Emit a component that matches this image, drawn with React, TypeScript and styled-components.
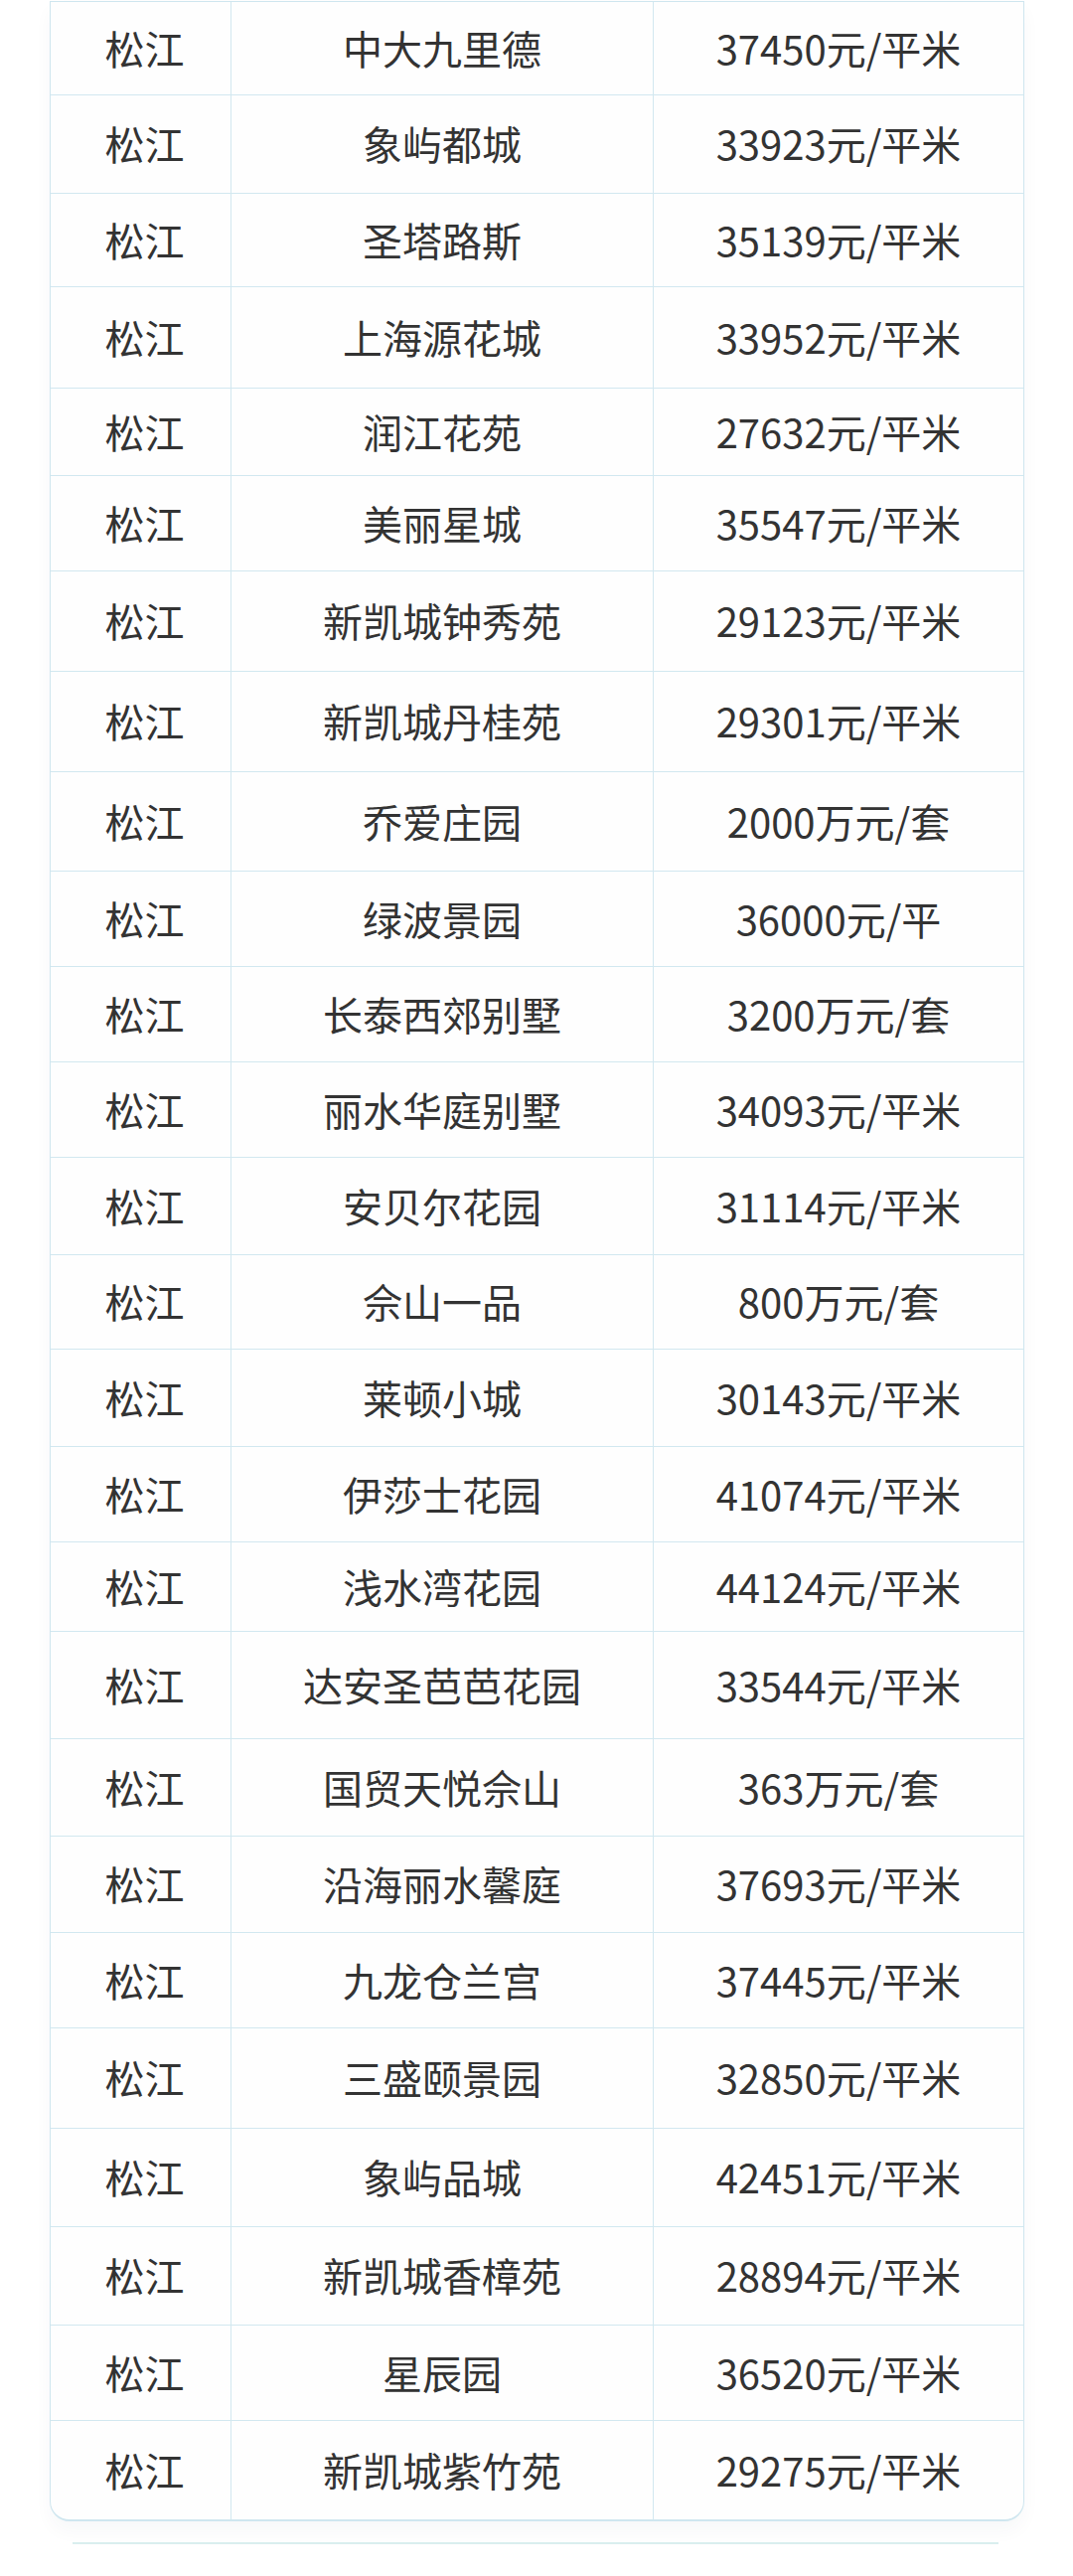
import styled, {createGlobalStyle} from "styled-components";

const GlobalStyle = createGlobalStyle`
  html, body {
    margin: 0;
    padding: 0;
    background: #ffffff;
  }
  body {
    font-family: "Noto Sans CJK SC", "Noto Sans", sans-serif;
  }
`

const Page = styled.div`
  width: 1080px;
  height: 2592px;
  padding-top: 1px;
  box-sizing: border-box;
  overflow: hidden;
  background: #ffffff;
`
const Table = styled.div`
  margin-left: 50px;
  width: 981px;
  box-sizing: border-box;
  border: 1px solid #cfe6ef;
  border-bottom-width: 2px;
  border-radius: 0 0 20px 20px;
  background: #fefefe;
  box-shadow: 0 10px 18px rgba(40, 70, 80, 0.035);
  overflow: hidden;
`
const Row = styled.div<{ $h: number; $last?: boolean }>`
  display: grid;
  grid-template-columns: 182px 425px 1fr;
  height: ${p => p.$h}px;
  box-sizing: border-box;
  border-bottom: ${p => (p.$last ? "none" : "1px solid #d2e8f0")};
`
const Cell = styled.div<{ $divider?: boolean; $shift?: number }>`
  display: flex;
  align-items: center;
  justify-content: center;
  padding-left: ${p => p.$shift ?? 0}px;
  padding-bottom: 2px;
  border-right: ${p => (p.$divider ? "1px solid #d2e8f0" : "none")};
  font-size: 40px;
  line-height: 1;
  color: #333333;
  white-space: nowrap;
`
const FootLine = styled.div`
  margin: 21px 0 0 73px;
  width: 932px;
  height: 2px;
  background: #d9eeee;
`

const rows: [string, string, number][] = [
    ["中大九里德", "37450元/平米", 94],
    ["象屿都城", "33923元/平米", 99],
    ["圣塔路斯", "35139元/平米", 94],
    ["上海源花城", "33952元/平米", 102],
    ["润江花苑", "27632元/平米", 88],
    ["美丽星城", "35547元/平米", 96],
    ["新凯城钟秀苑", "29123元/平米", 101],
    ["新凯城丹桂苑", "29301元/平米", 101],
    ["乔爱庄园", "2000万元/套", 100],
    ["绿波景园", "36000元/平", 96],
    ["长泰西郊别墅", "3200万元/套", 96],
    ["丽水华庭别墅", "34093元/平米", 96],
    ["安贝尔花园", "31114元/平米", 98],
    ["佘山一品", "800万元/套", 95],
    ["莱顿小城", "30143元/平米", 98],
    ["伊莎士花园", "41074元/平米", 96],
    ["浅水湾花园", "44124元/平米", 90],
    ["达安圣芭芭花园", "33544元/平米", 108],
    ["国贸天悦佘山", "363万元/套", 98],
    ["沿海丽水馨庭", "37693元/平米", 97],
    ["九龙仓兰宫", "37445元/平米", 96],
    ["三盛颐景园", "32850元/平米", 101],
    ["象屿品城", "42451元/平米", 99],
    ["新凯城香樟苑", "28894元/平米", 99],
    ["星辰园", "36520元/平米", 96],
    ["新凯城紫竹苑", "29275元/平米", 99],
]

export default function App() {
    return (
        <>
            <GlobalStyle/>
            <Page>
                <Table>
                    {rows.map(([name, price, h], i) => (
                        <Row key={name} $h={h} $last={i === rows.length - 1}>
                            <Cell $divider $shift={8}>松江</Cell>
                            <Cell $divider>{name}</Cell>
                            <Cell>{price}</Cell>
                        </Row>
                    ))}
                </Table>
                <FootLine/>
            </Page>
        </>
    )
}
